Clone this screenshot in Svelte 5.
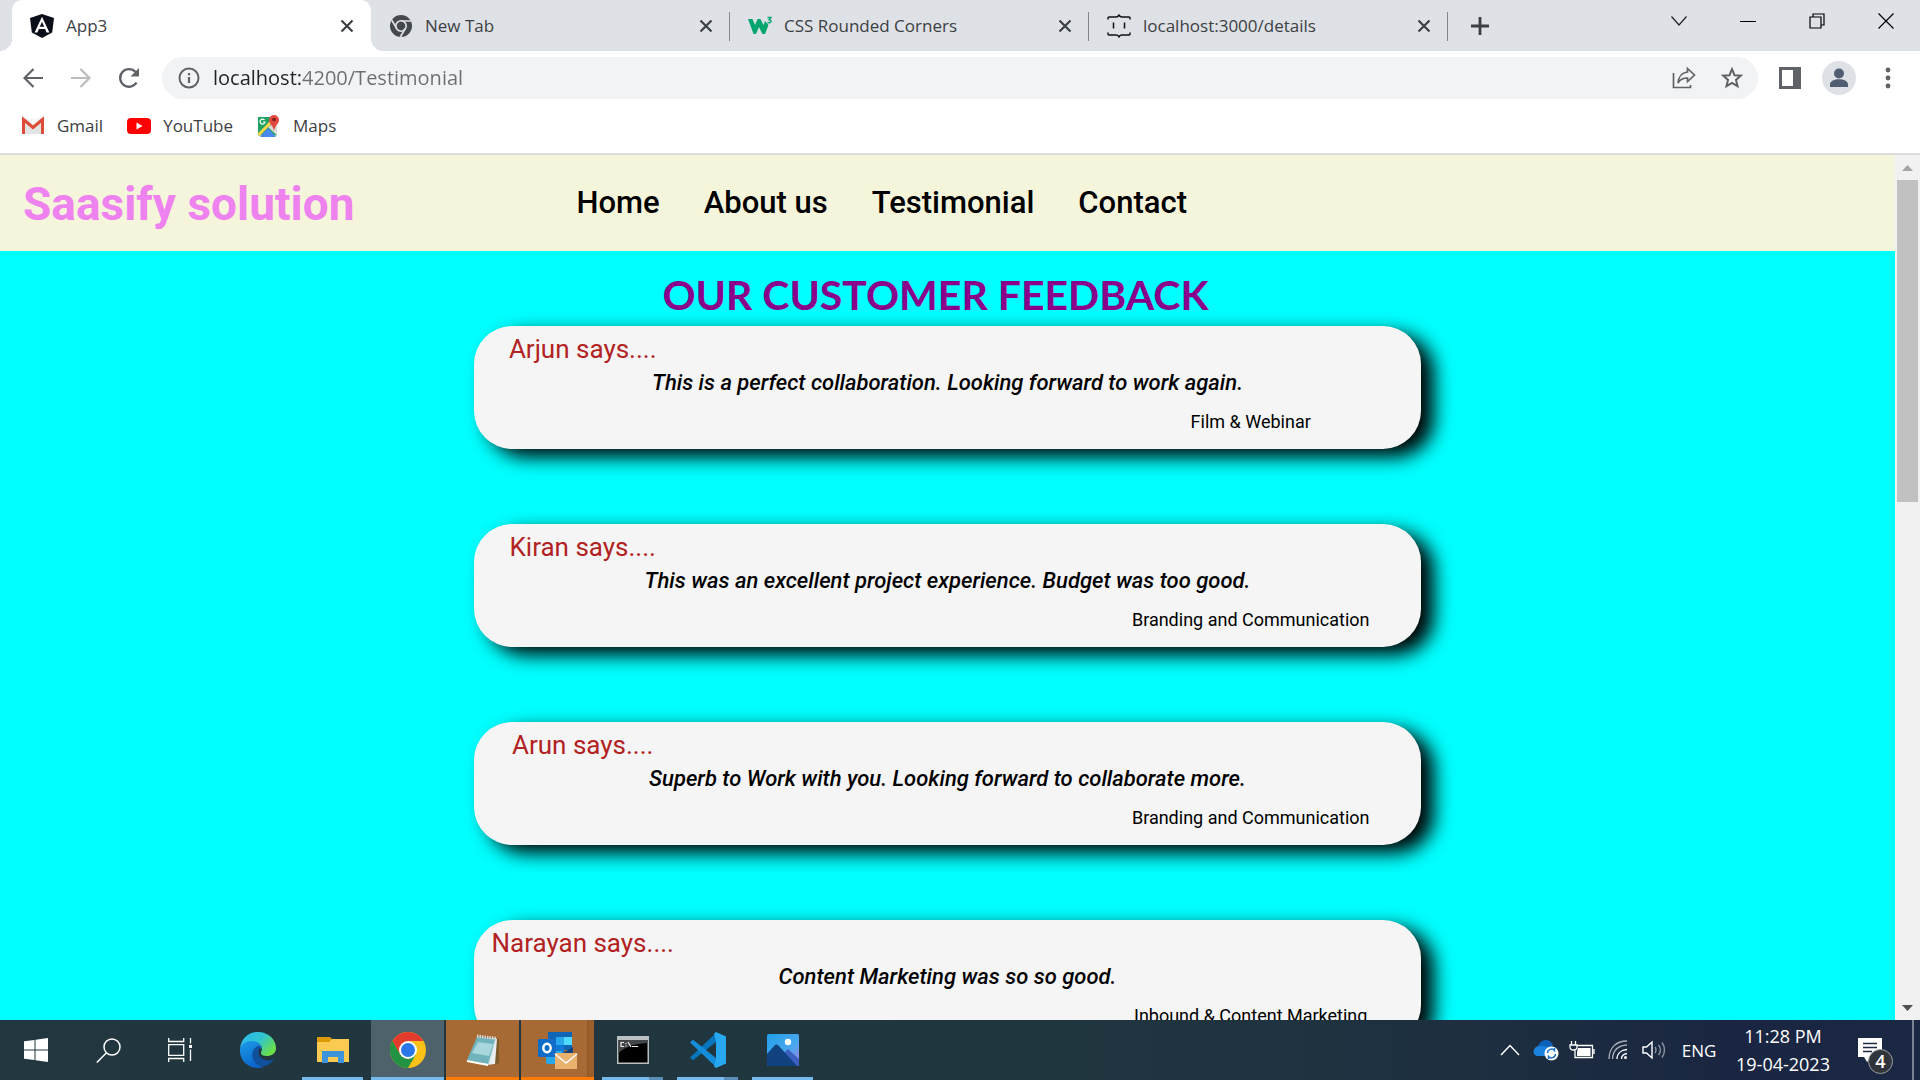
<script>
  const tabs = [
    { title: 'App3', icon: 'angular', active: true },
    { title: 'New Tab', icon: 'chrome' },
    { title: 'CSS Rounded Corners', icon: 'w3' },
    { title: 'localhost:3000/details', icon: 'braces' }
  ];

  const links = ['Home', 'About us', 'Testimonial', 'Contact'];

  const testimonials = [
    { name: 'Arjun', quote: 'This is a perfect collaboration. Looking forward to work again.', area: 'Film & Webinar' },
    { name: 'Kiran', quote: 'This was an excellent project experience. Budget was too good.', area: 'Branding and Communication' },
    { name: 'Arun', quote: 'Superb to Work with you. Looking forward to collaborate more.', area: 'Branding and Communication' },
    { name: 'Narayan', quote: 'Content Marketing was so so good.', area: 'Inbound & Content Marketing' }
  ];

  let address = $state('localhost:4200/Testimonial');
</script>

<div class="screen">
  <div class="tabstrip">
    <div class="tabs">
      {#each tabs as tab}
        <div class="tab" class:active={tab.active}>
          {#if tab.icon === 'angular'}
            <svg class="favicon" viewBox="0 0 24 24"><path fill="#0b0f19" d="M12 0 24 4 22.200 18.500 12 24 1.800 18.500 0 4z" /><path fill="#fff" d="M12 2.800 4.600 18.500h2.800l1.500-3.500h6.200l1.500 3.500h2.800zM12 7.800l2.200 5H9.800z" /></svg>
          {:else if tab.icon === 'chrome'}
            <svg class="favicon" viewBox="0 0 24 24"><circle cx="12" cy="12" r="11" fill="#45494d" /><g stroke="#dee1e6" stroke-width="1.600" fill="none"><path d="M12 7h10M7.700 14.500 2.700 6M16.300 14.500 11.300 23" /><circle cx="12" cy="12" r="5.200" /></g><circle cx="12" cy="12" r="3.400" fill="#45494d" /></svg>
          {:else if tab.icon === 'w3'}
            <svg class="favicon" viewBox="0 0 24 24"><path fill="#04a56f" d="M0 5h4.500l2.500 6 2.500-6h3l3 6 1.500-4 3.500 4-3.500 9h-2.500L11 13l-3 7H5.500z" /><path d="M19.500 3.500h3.500l-1.800 2.200c3 .2 2.500 3.800-1.700 2.800" fill="none" stroke="#04a56f" stroke-width="1.400" /></svg>
          {:else}
            <svg class="favicon" viewBox="0 0 24 24" fill="none" stroke="#111" stroke-width="1.500"><path d="M1 5.500V4q0-1 1-1h7q2 0 3-1.800Q13 3 15 3h7q1 0 1 1v1.500M1 18.500V20q0 1 1 1h7q2 0 3 1.800Q13 21 15 21h7q1 0 1-1v-1.500M6.500 8.500v6M17.500 8.500v6" /></svg>
          {/if}
          <span class="tab-title">{tab.title}</span>
          <button class="plain close" aria-label="Close tab">
            <svg width="14" height="14" viewBox="0 0 14 14"><path d="M1.500 1.500l11 11M12.500 1.500l-11 11" stroke="#3c4043" stroke-width="2.200" /></svg>
          </button>
        </div>
      {/each}
      <button class="plain newtab" aria-label="New tab">
        <svg width="18" height="18" viewBox="0 0 18 18"><path d="M9 0v18M0 9h18" stroke="#3c4043" stroke-width="2.800" /></svg>
      </button>
    </div>
    <div class="window-controls">
      <button class="plain" aria-label="Search tabs"><svg width="16" height="10" viewBox="0 0 16 10"><path d="M.5.5 8 9 15.500.5" fill="none" stroke="#222" stroke-width="1.200" /></svg></button>
      <button class="plain" aria-label="Minimize"><svg width="16" height="16" viewBox="0 0 16 16"><path d="M0 8.500h16" stroke="#000" /></svg></button>
      <button class="plain" aria-label="Restore"><svg width="16" height="16" viewBox="0 0 16 16" fill="none" stroke="#000" stroke-width="1.200"><path d="M1 4h11v11H1zM4 4V1h11v11h-3" /></svg></button>
      <button class="plain" aria-label="Close"><svg width="16" height="16" viewBox="0 0 16 16"><path d="M.5.5l15 15M15.500.5l-15 15" stroke="#000" stroke-width="1.200" /></svg></button>
    </div>
  </div>

  <div class="toolbar">
    <button class="plain tool" aria-label="Back"><svg width="20" height="20" viewBox="0 0 20 20" fill="none" stroke="#5f6368" stroke-width="2.200"><path d="M20 10H2M10.500 1 1.500 10l9 9" /></svg></button>
    <button class="plain tool" aria-label="Forward"><svg width="20" height="20" viewBox="0 0 20 20" fill="none" stroke="#babcbe" stroke-width="2.200"><path d="M0 10h18M9.500 1l9 9-9 9" /></svg></button>
    <button class="plain tool" aria-label="Reload"><svg width="22" height="22" viewBox="0 0 22 22"><path d="M18.500 15.500A8.800 8.800 0 1 1 17.500 5" fill="none" stroke="#5f6368" stroke-width="2.400" /><path fill="#5f6368" d="M21 1v8.500h-8.500z" /></svg></button>
    <div class="omnibox">
      <svg width="22" height="22" viewBox="0 0 22 22"><circle cx="11" cy="11" r="9.500" fill="none" stroke="#5f6368" stroke-width="2" /><path d="M11 10v6M11 6v2.200" stroke="#5f6368" stroke-width="2.200" /></svg>
      <input aria-label="Address" bind:value={address} spellcheck="false" />
      <button class="plain inner" aria-label="Share"><svg width="24" height="24" viewBox="0 0 24 24" fill="none" stroke="#5f6368" stroke-width="1.700"><path d="M1.500 7v14.500h17V19" /><path d="M15.500 2.500 22.500 9l-7 6.500V12c-5 0-7.500 1.500-9.500 5C6.500 11 10 6.500 15.500 6z" /></svg></button>
      <button class="plain inner" aria-label="Bookmark"><svg width="22" height="22" viewBox="0 0 22 22"><path d="M11 2.200 13.500 8.200l6.300.5-4.800 4.200 1.500 6.200L11 15.800l-5.500 3.300L7 12.900 2.200 8.700l6.300-.5z" fill="none" stroke="#5f6368" stroke-width="2" /></svg></button>
    </div>
    <div class="actions">
      <button class="plain" aria-label="Side panel"><svg width="22" height="22" viewBox="0 0 22 22"><path fill="#5f6368" d="M0 0h22v22H0z" /><path fill="#fff" d="M3 3h11v16H3z" /></svg></button>
      <button class="plain" aria-label="Profile"><svg width="34" height="34" viewBox="0 0 34 34"><circle cx="17" cy="17" r="17" fill="#dee1e6" /><circle cx="17" cy="12.500" r="5" fill="#515d72" /><path fill="#515d72" d="M8 26v-2.500c0-7 18-7 18 0V26z" /></svg></button>
      <button class="plain" aria-label="Menu"><svg width="6" height="22" viewBox="0 0 6 22" fill="#5f6368"><circle cx="3" cy="3" r="2.400" /><circle cx="3" cy="11" r="2.400" /><circle cx="3" cy="19" r="2.400" /></svg></button>
    </div>
  </div>

  <nav class="bookmarks" aria-label="Bookmarks">
    <a href="#gmail"><svg width="24" height="24" viewBox="0 0 24 24"><path fill="#e3e3e3" d="M2 4h20v16H2z" /><path fill="#f7f7f7" d="M4 4h16l-8 7z" /><path fill="none" stroke="#dd4b39" stroke-width="3" d="M2.500 20V5.500L12 13.500l9.500-8V20" /></svg>Gmail</a>
    <a href="#youtube"><svg width="24" height="24" viewBox="0 0 24 24"><rect y="4" width="24" height="16" rx="4" fill="#f00" /><path fill="#fff" d="M9.500 8.500v7l6-3.500z" /></svg>YouTube</a>
    <a href="#maps"><svg width="24" height="24" viewBox="0 0 24 24"><path fill="#1ea362" d="M1 3h19v18.500H1z" /><path fill="#dadada" d="M20 7v14.500L11 13z" /><path fill="#4a89f3" d="M3 23 11 14l8 9z" /><path stroke="#ffd54b" stroke-width="3" d="M1.500 21 17 5" /><path d="M7.500 6A2.500 2.500 0 1 0 8 8H6" fill="none" stroke="#fff" stroke-width="1.200" /><path fill="#e04a3f" d="M17 17c-1-6-5-7-5-11a5 5 0 0 1 10 0c0 4-4 5-5 11z" /><circle cx="17" cy="5.500" r="1.800" fill="#7b1c16" /></svg>Maps</a>
  </nav>

  <div class="viewport">
    <div class="page">
      <header>
        <h1>Saasify solution</h1>
        <nav class="site-nav" aria-label="Site">
          {#each links as link}<a href="#{link}">{link}</a>{/each}
        </nav>
      </header>
      <main>
        <h2>OUR CUSTOMER FEEDBACK</h2>
        <div class="cards">
          {#each testimonials as t}
            <article class="card">
              <h3>{t.name} says....</h3>
              <blockquote>{t.quote}</blockquote>
              <p>{t.area}</p>
            </article>
          {/each}
        </div>
      </main>
    </div>
    <div class="scrollbar">
      <svg class="arrow" viewBox="0 0 25 25"><path fill="#a3a3a3" d="M7 16h11l-5.500-6z" /></svg>
      <div class="track"><div class="thumb"></div></div>
      <svg class="arrow" viewBox="0 0 25 25"><path fill="#505050" d="M7 10h11l-5.500 6z" /></svg>
    </div>
  </div>

  <footer class="taskbar">
    <div class="system">
      <button class="plain" aria-label="Start"><svg width="24" height="24" viewBox="0 0 24 24" fill="#fff"><path d="M0 3.300 10.500 2v9.500H0zM11.500 1.800 24 0v11.500H11.500zM0 12.500h10.500V22L0 20.700zM11.500 12.500H24V24l-12.500-1.800z" /></svg></button>
      <button class="plain" aria-label="Search"><svg width="25" height="25" viewBox="0 0 25 25" fill="none" stroke="#fff" stroke-width="1.500"><circle cx="16" cy="9" r="8" /><path d="M10.300 15 .8 24.500" /></svg></button>
      <button class="plain" aria-label="Task view"><svg width="24" height="24" viewBox="0 0 24 24" fill="none" stroke="#fff" stroke-width="1.300"><path d="M.7 0v3.500h15V0M.7 24v-3.500h15V24M.7 6.700h15v10.600H.7zM22.500 0v5.500M22.500 11.500V23" /><path fill="#fff" stroke="none" d="M21 7h3v3h-3z" /></svg></button>
    </div>
    <div class="apps">
      <button class="plain" aria-label="Edge">
        <svg width="36" height="36" viewBox="0 0 36 36"><defs><linearGradient id="eg" x1="0" y1="0" x2="1" y2=".6"><stop offset="0" stop-color="#2bb7f3" /><stop offset=".55" stop-color="#2fc4cf" /><stop offset="1" stop-color="#6be04a" /></linearGradient><linearGradient id="eb" x1="0" y1="0" x2=".5" y2="1"><stop offset="0" stop-color="#1c9be8" /><stop offset="1" stop-color="#0a66cc" /></linearGradient></defs><path fill="url(#eg)" d="M0 17C1 6 9 0 18 0c11 0 18 8 18 16 0 6-5 8-9 8s-6-1-6-3 1-2 1-4c0-4-4-7-10-7-7 0-11 4-12 7z" /><path fill="url(#eb)" d="M0 17c1-5 6-8 11-8 8 0 11 5 11 8-5-3-9 1-9 6 0 7 5 11 11 12C10 39-1 29 0 17z" /><path fill="#10509f" d="M18 14c-5 2-7 8-5 13 3 8 14 11 21 0-6 3-13 1-15-4-1-4 0-7 2-8-1-1-2-1-3-1z" /></svg>
      </button>
      <button class="plain open" aria-label="File Explorer">
        <svg width="32" height="32" viewBox="0 0 32 32"><path fill="#dc9a04" d="M0 3h13l2 2v6H0z" /><path fill="#fbcb51" d="M0 8h12l3-3h17v23H0z" /><path fill="#3b94dc" d="M5 17h22v12h-6v-6H11v6H5z" /></svg>
      </button>
      <button class="plain open current" aria-label="Chrome">
        <svg width="36" height="36" viewBox="0 0 36 36"><circle cx="18" cy="18" r="18" fill="#fbc116" /><path fill="#e33b2e" d="M2.400 9A18 18 0 0 1 33.600 9H18l-7.800 13.500z" /><path fill="#229342" d="M2.400 9A18 18 0 0 0 18 36l7.800-13.500H10.200z" /><circle cx="18" cy="18" r="9" fill="#fff" /><circle cx="18" cy="18" r="7" fill="#2a77ea" /></svg>
      </button>
      <button class="plain open alert" aria-label="Notepad">
        <svg width="34" height="34" viewBox="0 0 34 34"><path fill="#7d5a2b" d="M29 5l4 1v24l-5 2z" /><path fill="#e9eff0" d="M26 5l5 1-2 25-9 1z" /><path fill="#bfd9de" d="M11 4l19 2-7 26-5-1z" /><path fill="#70b3bd" d="M11 4 29 6l-7 25L1 27z" /><path fill="#a8d8dd" d="M12 9l15 2-4 12L6 20z" /><path stroke="#d8dddd" stroke-width="3" stroke-dasharray="1.500 1" d="M11 3l20 2.500" /><path stroke="#fff" stroke-width="2" d="M1 28l21 4" /></svg>
      </button>
      <button class="plain open alert stacked" aria-label="Outlook">
        <svg width="40" height="38" viewBox="0 0 40 38"><path fill="#1066b5" d="M10 1h24v18H10z" /><path fill="#28a8ea" d="M18 6h8v8h-8z" /><path fill="#50d9ff" d="M26 6h8v8h-8z" /><path fill="#0f78d4" d="M18 14h8v8h-8z" /><path fill="#27a8e8" d="M8 20h16v13H10q-2 0-2-2z" /><path fill="#14447d" d="m35 16-10 6h10z" /><rect y="8" width="18" height="18" rx="1.500" fill="#0f6cc8" /><ellipse cx="9" cy="17" rx="3.700" ry="4.300" fill="none" stroke="#fff" stroke-width="2.500" /><path fill="#e8b16e" d="M17 22h22v16H17z" /><path fill="none" stroke="#fff" stroke-width="1.500" d="m17 23 11 9 11-9" /></svg>
      </button>
      <button class="plain open multi" aria-label="Command Prompt">
        <svg width="32" height="28" viewBox="0 0 32 28"><path fill="#bbc0c3" d="M0 0h32v28H0z" /><path d="M1.500 4h29v22.500h-29z" /><path fill="#424648" d="M1.500 4h29v3C15 8 5 12 1.500 18z" /><path d="M7 6.500H4v4h3M9 7v1M9 9.500v1M11 6l3 5M15 10.500h6" fill="none" stroke="#eee" stroke-width="1.200" /></svg>
      </button>
      <button class="plain open multi" aria-label="Visual Studio Code">
        <svg width="36" height="36" viewBox="0 0 36 36"><path fill="#0875bd" d="M0 25.500 26 1v9L4 27.500q-1 1-2 0z" /><path fill="#168dd8" d="M0 10.500 2 8.500q1-1 2 0L26 26v9z" /><path fill="#29a8f2" d="m26 0 10 4.500v27L26 36l-2-1.500 2-8V9.500l-2-8z" /></svg>
      </button>
      <button class="plain open" aria-label="Photos">
        <svg width="32" height="32" viewBox="0 0 32 32"><defs><linearGradient id="ph" x1="0" y1="0" x2="1" y2="1"><stop offset="0" stop-color="#20a0e8" /><stop offset=".6" stop-color="#4aa7ee" /><stop offset="1" stop-color="#a57ee0" /></linearGradient><clipPath id="pc"><rect width="32" height="32" rx="1.500" /></clipPath></defs><g clip-path="url(#pc)"><path fill="url(#ph)" d="M0 0h32v32H0z" /><path fill="#3d5fc0" d="m14 22 7-7 11 10v7H14z" /><path fill="#12417f" d="m0 20 8-9q1-1 3 0l19 21H0z" /><circle cx="21" cy="8" r="3.200" fill="#fff" /></g></svg>
      </button>
    </div>
    <div class="tray">
      <button class="plain" aria-label="Hidden icons"><svg width="20" height="12" viewBox="0 0 20 12"><path d="m1 11 9-9.500 9 9.500" fill="none" stroke="#fff" stroke-width="1.500" /></svg></button>
      <button class="plain" aria-label="OneDrive"><svg width="26" height="22" viewBox="0 0 26 22"><path fill="#0c62b8" d="M5 7C8-1 18-1 20 7l-5 8z" /><path fill="#1b83dd" d="M5 17C-1 17-1 8 6 7l16 1q4 3 2 9z" /><circle cx="18.500" cy="14.500" r="7" fill="#fff" /><path d="M14.500 14a4 4 0 0 1 7-2.500V9M22.500 15a4 4 0 0 1-7 2.500V20" fill="none" stroke="#1771c8" stroke-width="1.500" /></svg></button>
      <button class="plain" aria-label="Battery"><svg width="26" height="20" viewBox="0 0 26 20"><path fill="none" stroke="#fff" stroke-width="1.300" d="M8 5.500h15.500v12H6V9M2.500 1v4M6.500 1v4M1 5h7v2q0 3-3.500 3T1 7zM25 9v5" /><path fill="#fff" d="M9 8h12.500v8H8v-4z" /></svg></button>
      <button class="plain" aria-label="Network"><svg width="20" height="20" viewBox="0 0 20 20" fill="none" stroke="#fff" stroke-width="1.300"><path stroke="#a9aeb8" d="M1 19C1 8 8 1 19 1M4.500 19C5 10 10 5.500 19 5" /><path d="M9 19c0-5.500 4-9 10-9.500M13.500 19c0-3 2-5 5.500-5.500" /><circle cx="17.500" cy="17.500" r="1.500" fill="#fff" stroke="none" /></svg></button>
      <button class="plain" aria-label="Volume"><svg width="24" height="20" viewBox="0 0 24 20" fill="none" stroke="#fff" stroke-width="1.400"><path d="M1 7v6h3.500L10 18V2L4.500 7z" /><path stroke="#8a92a1" d="M13 7q2 3 0 6M16.500 5q4 5 0 10M20 2.500q5 7.500 0 15" /></svg></button>
      <button class="plain language">ENG</button>
      <button class="plain clock"><time>11:28 PM</time><time>19-04-2023</time></button>
      <button class="plain notes" aria-label="Notifications">
        <svg width="26" height="26" viewBox="0 0 26 26"><path fill="#fff" d="M1 1h24v19H15l-5 5-3-5H1z" /><path stroke="#1c2940" stroke-width="1.500" d="M6 6.500h14M6 10.500h14M6 14.500h9" /></svg>
        <span class="badge">4</span>
      </button>
      <span class="peek"></span>
    </div>
  </footer>
</div>

<style>
  :global(body) { margin: 0; }
  .screen { display: flex; flex-direction: column; height: 100vh; overflow: hidden; background: #fff; font-family: "Open Sans", "Noto Sans", sans-serif; color: #3c4043; }
  .plain { display: flex; align-items: center; justify-content: center; padding: 0; border: 0; background: none; color: inherit; font: inherit; }
  svg { display: block; flex: none; }
  a { color: inherit; text-decoration: none; }

  .tabstrip { display: flex; justify-content: space-between; flex: none; height: 51px; background: #dee1e6; }
  .tabs { display: flex; flex: 1; min-width: 0; padding-left: 12px; }
  .tab { display: flex; align-items: center; flex: 0 1 359px; min-width: 0; box-sizing: border-box; padding: 0 12px 0 18px; gap: 12px; font-size: 17px; position: relative; }
  .tab.active { background: #fff; border-radius: 10px 10px 0 0; }
  .tab.active::before, .tab.active::after { content: ""; position: absolute; bottom: 0; width: 12px; height: 12px; }
  .tab.active::before { right: 100%; background: radial-gradient(circle at 0 0, #dee1e6 12px, #fff 12px); }
  .tab.active::after { left: 100%; background: radial-gradient(circle at 100% 0, #dee1e6 12px, #fff 12px); }
  .tab:not(.active)::after { content: ""; position: absolute; right: 0; top: 12px; width: 1px; height: 29px; background: #85898e; }
  .favicon { width: 24px; height: 24px; }
  .tab-title { flex: 1; overflow: hidden; white-space: nowrap; }
  .close { width: 24px; height: 24px; }
  .newtab { width: 64px; }
  .window-controls { display: flex; height: 42px; }
  .window-controls button { width: 69px; }

  .toolbar { display: flex; align-items: center; flex: none; height: 54px; padding-left: 9px; }
  .tool { width: 48px; height: 42px; }
  .omnibox { display: flex; align-items: center; flex: 1; height: 42px; margin-left: 9px; padding: 0 2px 0 16px; gap: 13px; border-radius: 21px; background: #f1f3f4; }
  .omnibox input { flex: 1; min-width: 0; padding: 0; border: 0; outline: 0; font: 20px/28px "Open Sans", "Noto Sans", sans-serif; color: transparent; background: linear-gradient(90deg, #202124 88px, #6b6f73 88px); -webkit-background-clip: text; background-clip: text; }
  .inner { width: 48px; height: 42px; margin-left: -13px; }
  .actions { display: flex; padding: 0 8px 0 7px; }
  .actions button { width: 49px; height: 42px; }

  .bookmarks { display: flex; align-items: center; flex: none; box-sizing: border-box; height: 50px; padding: 0 21px 7px; gap: 24px; border-bottom: 2px solid #dcdcdc; font-size: 17px; }
  .bookmarks a { display: flex; align-items: center; gap: 12px; }

  .viewport { display: flex; flex: 1; min-height: 0; background: #f1f1f1; }
  .page { flex: 1; min-width: 0; overflow: hidden; background: #0ff; font-family: Roboto, sans-serif; color: #000; }
  header { display: flex; align-items: center; height: 96px; background: #f5f5dc; }
  h1 { flex: 0 0 30%; box-sizing: border-box; margin: 0; padding: 2px 0 0 23px; color: #ee82ee; font-size: 46px; line-height: 56px; }
  .site-nav { display: flex; gap: 44px; padding-left: 8px; font-size: 31px; font-weight: 500; line-height: 40px; }
  h2 { margin: 0; padding: 18px 24px 5px 0; text-align: center; font: 700 41px/52px Lato, sans-serif; color: #8b008b; }
  .cards { display: flex; flex-direction: column; gap: 75px; width: 50%; margin: 0 auto; }
  .card { padding: 7px 0 6px; border-radius: 38px; background: #f5f5f5; box-shadow: 13px 8px 19px #000; }
  h3 { width: 23%; margin: 0; text-align: center; white-space: nowrap; font-size: 26px; font-weight: 400; line-height: 32px; color: #b22222; }
  blockquote { margin: 0; text-align: center; font-size: 22px; font-style: italic; font-weight: 500; line-height: 36px; }
  p { width: 36%; margin: 0 0 0 auto; text-align: center; font-size: 18px; line-height: 42px; }

  .scrollbar { display: flex; flex-direction: column; flex: none; width: 25px; }
  .arrow { width: 25px; height: 25px; }
  .track { flex: 1; padding: 0 2px; }
  .thumb { height: 39.5%; background: #c1c1c1; }

  .taskbar { display: flex; flex: none; height: 60px; background: linear-gradient(90deg, #21363f 0%, #20363f 55%, #1e3040 75%, #1a2641 90%, #1b2843 100%); color: #fff; }
  .system, .apps, .tray { display: flex; }
  .system button { width: 72px; }
  .apps { flex: 1; margin-left: 5px; gap: 2px; }
  .apps button { width: 73px; position: relative; }
  .apps .open::after { content: ""; position: absolute; left: 6px; right: 6px; bottom: 0; height: 3px; background: #76b9ed; }
  .apps .multi::after { background: linear-gradient(90deg, #76b9ed 47px, #5a8db8 47px); }
  .apps .current { background: #4e626b; }
  .apps .current::after, .apps .alert::after { left: 0; right: 0; }
  .apps .alert { background: #a76a34; }
  .apps .alert::after { background: #ff7a00; }
  .apps .stacked { background: linear-gradient(90deg, #a76a34 66px, #8f5524 66px, #9c5f2b 68px); }
  .tray button { width: 36px; }
  .tray .language { width: 54px; font-size: 17px; }
  .tray .clock { flex-direction: column; width: 114px; font-size: 18px; line-height: 28px; }
  .tray .notes { width: 60px; position: relative; }
  .badge { position: absolute; left: 28px; top: 29px; width: 23px; height: 23px; border: 1px solid #9a9da3; border-radius: 50%; background: #30343b; font-size: 18px; font-weight: 600; line-height: 23px; text-align: center; }
  .peek { width: 6px; margin-left: 12px; border-left: 2px solid #7a8294; }
</style>
